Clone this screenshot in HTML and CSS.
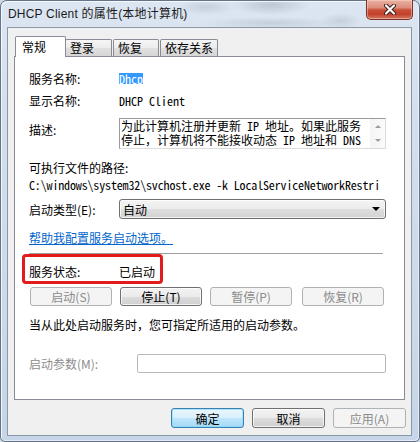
FILE: index.html
```html
<!DOCTYPE html>
<html lang="zh-CN">
<head>
<meta charset="utf-8">
<title>DHCP Client 的属性(本地计算机)</title>
<link rel="stylesheet" href="styles.css">
</head>
<body>
<div class="window">
  <div class="titlebar">
    <span class="title">DHCP Client 的属性(本地计算机)</span>
    <div class="close">
      <svg width="14" height="11" viewBox="0 0 14 11">
        <path d="M3 1.5 L11 9.5 M11 1.5 L3 9.5" stroke="#3b1a14" stroke-width="4" stroke-linecap="round"/>
        <path d="M3 1.5 L11 9.5 M11 1.5 L3 9.5" stroke="#ffffff" stroke-width="2.2" stroke-linecap="round"/>
      </svg>
    </div>
  </div>
  <div class="client">
    <div class="tabs">
      <div class="tab active">常规</div>
      <div class="tab t2">登录</div>
      <div class="tab t3">恢复</div>
      <div class="tab t4">依存关系</div>
    </div>
    <div class="panel">
      <div class="row r1"><span class="lbl">服务名称:</span><span class="mono sel">Dhcp</span></div>
      <div class="row r2"><span class="lbl">显示名称:</span><span class="mono">DHCP Client</span></div>
      <div class="row r3">
        <span class="lbl desc-lbl">描述:</span>
        <div class="descbox">
          <div class="desc-text mono"><div class="dl">为此计算机注册并更新 IP 地址。如果此服务</div><div class="dl">停止，计算机将不能接收动态 IP 地址和 DNS</div></div>
          <div class="sbar"><span class="arr up"></span><span class="arr down"></span></div>
        </div>
      </div>
      <div class="row r4">可执行文件的路径:</div>
      <div class="row r5 mono path">C:\windows\system32\svchost.exe -k LocalServiceNetworkRestri</div>
      <div class="row r6">
        <span class="lbl">启动类型(E):</span>
        <div class="combo"><span>自动</span><span class="carr"></span></div>
      </div>
      <div class="row r7"><span class="link">帮助我配置服务启动选项。</span></div>
      <div class="sep"></div>
      <div class="row r8"><span class="lbl">服务状态:</span><span>已启动</span></div>
      <div class="row r9 btnrow">
        <div class="btn dis">启动(S)</div>
        <div class="btn">停止(T)</div>
        <div class="btn dis">暂停(P)</div>
        <div class="btn dis last">恢复(R)</div>
      </div>
      <div class="row r10">当从此处启动服务时，您可指定所适用的启动参数。</div>
      <div class="row r11">
        <span class="lbl lbl2 disabled">启动参数(M):</span>
        <div class="input"></div>
      </div>
      <div class="annot"></div>
    </div>
    <div class="footer">
      <div class="btn fbtn def">确定</div>
      <div class="btn fbtn">取消</div>
      <div class="btn fbtn dis">应用(A)</div>
    </div>
  </div>
</div>
</body>
</html>
```
FILE: styles.css
```css
* { box-sizing: border-box; }
html, body { margin: 0; padding: 0; }
body {
  width: 420px;
  height: 442px;
  overflow: hidden;
  background: #c9d7e7;
  font-family: "Noto Sans CJK SC", sans-serif;
  font-size: 12px;
  color: #000;
}
.window {
  width: 420px;
  height: 442px;
  border: 1px solid #62738a;
  border-radius: 7px 7px 5px 5px;
  padding: 0 7px 5px 6px;
  display: flex;
  flex-direction: column;
  background:
    radial-gradient(ellipse 40px 10px at 270px 4px, rgba(110,120,135,0.28), rgba(110,120,135,0)),
    radial-gradient(ellipse 30px 8px at 205px 6px, rgba(110,120,135,0.2), rgba(110,120,135,0)),
    radial-gradient(ellipse 70px 6px at 270px 22px, rgba(120,130,145,0.22), rgba(120,130,145,0)),
    radial-gradient(ellipse 20px 8px at 340px 20px, rgba(110,120,135,0.2), rgba(110,120,135,0)),
    linear-gradient(180deg, #dce6f2 0%, #d2deec 30%, #c6d5e7 100%);
  box-shadow: inset 1px 1px 0 rgba(255,255,255,0.75), inset -1px -1px 0 rgba(255,255,255,0.5);
}
.titlebar {
  height: 26px;
  margin: 0 -7px 0 -6px;
  padding-left: 7px;
  display: flex;
  align-items: flex-start;
}
.title {
  line-height: 26px;
  font-size: 12px;
  color: #1b1b1b;
  font-family: "Liberation Sans", "Noto Sans CJK SC", sans-serif;
  letter-spacing: 0.2px;
}
.close {
  margin-left: auto;
  margin-right: 6px;
  margin-top: -1px;
  width: 47px;
  height: 20px;
  border: 1px solid #7a3328;
  border-top: none;
  border-radius: 0 0 5px 5px;
  background: linear-gradient(180deg, #eab2a4 0%, #dc8d7c 40%, #c9503a 52%, #c2412b 75%, #d57a62 100%);
  box-shadow: inset 0 0 0 1px rgba(255,220,210,0.45);
  display: flex;
  align-items: center;
  justify-content: center;
}
.client {
  flex: 1;
  border: 1px solid #8b98a8;
  background: #f0f0f0;
  display: flex;
  flex-direction: column;
}
.tabs {
  display: flex;
  align-items: flex-end;
  height: 21px;
  margin: 8px 0 0 7px;
  position: relative;
  z-index: 2;
}
.tab {
  height: 17px;
  margin-bottom: 1px;
  border: 1px solid #898c95;
  border-bottom: none;
  border-radius: 2px 2px 0 0;
  background: linear-gradient(180deg, #f6f6f6 0%, #ececec 50%, #e0e0e0 51%, #d6d6d6 100%);
  padding-left: 4px;
  line-height: 16px;
  position: relative;
}
.tab.active {
  width: 51px;
  height: 21px;
  margin-bottom: 0;
  background: #fff;
  padding-left: 6px;
  line-height: 20px;
  z-index: 3;
}
.t2 { width: 47px; margin-left: -1px; }
.t3 { width: 46px; margin-left: 1px; }
.t4 { width: 58px; margin-left: 1px; }
.panel {
  margin: -1px 6px 0 6px;
  height: 344px;
  border: 1px solid #898c95;
  background: #fff;
  position: relative;
  padding: 11px 14px 0 14px;
}
.row {
  display: flex;
  align-items: center;
  height: 20px;
  white-space: nowrap;
}
.lbl { width: 90px; flex: none; }
.mono {
  font-family: "Noto Sans Mono CJK SC", "Liberation Mono", monospace;
  font-size: 12px;
}
.sel {
  background: #3399ff;
  color: #fff;
  line-height: 12px;
  height: 11px;
  display: inline-block;
  padding: 0;
}
.r2 { margin-top: 2px; }
.r3 { margin-top: 8px; height: 31px; align-items: flex-start; }
.desc-lbl { line-height: 24px; }
.descbox {
  width: 267px;
  height: 31px;
  border: 1px solid;
  border-color: #9a9a9a #dcdcdc #dcdcdc #9a9a9a;
  display: flex;
}
.desc-text {
  flex: 1;
  padding-left: 1px;
  display: flex;
  flex-direction: column;
}
.dl { height: 14px; line-height: 14px; }
.sbar {
  width: 15px;
  flex: none;
  background: linear-gradient(90deg, #f4f4f4, #fbfbfb);
  display: flex;
  flex-direction: column;
  justify-content: space-between;
  align-items: center;
  padding: 6px 0 6px 0;
}
.arr { width: 0; height: 0; border-left: 3px solid transparent; border-right: 3px solid transparent; }
.arr.up { border-bottom: 3px solid #9b9b9b; }
.arr.down { border-top: 3px solid #9b9b9b; }
.r4 { margin-top: 9px; height: 18px; }
.r5 { height: 16px; letter-spacing: -0.15px; }
.r6 { margin-top: 7px; }
.combo {
  width: 267px;
  height: 20px;
  border: 1px solid #707070;
  border-radius: 3px;
  background: linear-gradient(180deg, #f4f4f4 0%, #ececec 50%, #dedede 51%, #d2d2d2 100%);
  box-shadow: inset 0 0 0 1px rgba(255,255,255,0.7);
  display: flex;
  align-items: center;
  justify-content: space-between;
  padding: 0 5px 0 3px;
}
.carr {
  width: 0; height: 0;
  border-left: 4px solid transparent;
  border-right: 4px solid transparent;
  border-top: 4px solid #000;
}
.r7 { margin-top: 9px; height: 18px; }
.link { color: #0066cc; text-decoration: underline; }
.sep {
  margin-top: 7px;
  width: 354px;
  height: 1px;
  background: #a0a0a0;
}
.r8 { margin-top: 7px; }
.r9 { margin-top: 6px; height: 19px; padding-left: 1px; gap: 8px; }
.btn {
  height: 19px;
  width: 82px;
  border: 1px solid #707070;
  border-radius: 3px;
  background: linear-gradient(180deg, #f3f3f3 0%, #ebebeb 50%, #dddddd 51%, #cfcfcf 100%);
  box-shadow: inset 0 0 0 1px rgba(255,255,255,0.75);
  display: flex;
  align-items: center;
  justify-content: center;
  font-size: 12px;
  white-space: nowrap;
}
.btn.dis {
  border-color: #adb2b5;
  background: #f4f4f4;
  color: #8b8b8b;
  box-shadow: none;
}
.btn.last { margin-left: 2px; }
.r10 { margin-top: 8px; }
.r11 { margin-top: 20px; height: 19px; }
.lbl2 { width: 108px; }
.disabled { color: #8d8d8d; }
.input {
  width: 249px;
  height: 19px;
  border: 1px solid #b8b8b8;
  border-radius: 2px;
  background: #fff;
}
.annot {
  position: absolute;
  left: 7px;
  top: 197px;
  width: 141px;
  height: 30px;
  border: 3px solid #e21b1b;
  border-radius: 4px;
}
.footer {
  margin-top: 8px;
  display: flex;
  justify-content: flex-end;
  gap: 8px;
  padding-right: 5px;
}
.fbtn { width: 73px; height: 20px; }
.btn.def {
  border-color: #3c7fb1;
  background: linear-gradient(180deg, #eaf6fd 0%, #d9f0fc 50%, #bee6fd 51%, #a7d9f5 100%);
  box-shadow: inset 0 0 0 1px rgba(120,220,255,0.6);
}
```
